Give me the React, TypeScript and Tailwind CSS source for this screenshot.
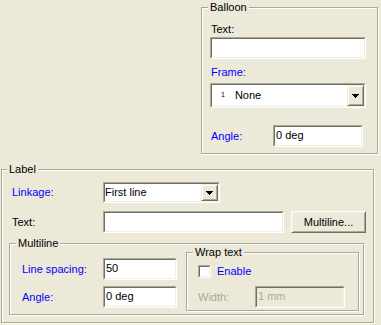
import React from "react";

function Group({
  title,
  className = "",
  legendLeft = "left-[5px]",
  children,
}: {
  title: string;
  className?: string;
  legendLeft?: string;
  children?: React.ReactNode;
}) {
  return (
    <div
      className={`relative border border-[#ACA899] shadow-[inset_1px_1px_0_#fff,1px_1px_0_#fff] ${className}`}
    >
      <span
        className={`absolute top-[-7px] ${legendLeft} bg-[#ECE9D8] px-[2px] leading-[13px] text-black`}
      >
        {title}
      </span>
      {children}
    </div>
  );
}

function Sunken({
  className = "",
  disabled = false,
  children,
}: {
  className?: string;
  disabled?: boolean;
  children?: React.ReactNode;
}) {
  return (
    <div
      className={`border border-t-[#ACA899] border-l-[#ACA899] border-b-white border-r-white ${className}`}
    >
      <div
        className={`h-full w-full border border-t-[#716F64] border-l-[#716F64] border-b-[#F1EFE2] border-r-[#F1EFE2] flex items-center ${
          disabled ? "bg-[#ECE9D8] text-[#ACA899]" : "bg-white text-black"
        }`}
      >
        {children}
      </div>
    </div>
  );
}

function Arrow() {
  return (
    <svg width="7" height="4" viewBox="0 0 7 4" className="block">
      <path d="M0 0h7v1H0zM1 1h5v1H1zM2 2h3v1H2zM3 3h1v1H3z" fill="#000" />
    </svg>
  );
}

function ArrowButton() {
  return (
    <div className="ml-auto w-[17px] h-full bg-[#ECE9D8] border border-t-[#F1EFE2] border-l-[#F1EFE2] border-b-[#716F64] border-r-[#716F64] shadow-[inset_1px_1px_0_#fff,inset_-1px_-1px_0_#ACA899] flex items-center justify-center">
      <Arrow />
    </div>
  );
}

function Checkbox() {
  return (
    <div className="w-[13px] h-[13px] border border-t-[#ACA899] border-l-[#ACA899] border-b-white border-r-white">
      <div className="w-full h-full bg-white border border-t-[#716F64] border-l-[#716F64] border-b-[#F1EFE2] border-r-[#F1EFE2]" />
    </div>
  );
}

export default function App() {
  return (
    <div className="w-[381px] h-[325px] overflow-hidden bg-[#ECE9D8] text-[11px] leading-[13px] text-black font-['Liberation_Sans',Arial,sans-serif] flex flex-col pt-[7px]">
      {/* Balloon */}
      <div className="pl-[201px]">
        <Group title="Balloon" className="w-[177px] h-[147px]" legendLeft="left-[6px]">
          <div className="flex flex-col pl-[8px] pt-[15px]">
            <div className="ml-[1px]">Text:</div>
            <Sunken className="mt-[1px] w-[156px] h-[22px]" />
            <div className="ml-[1px] mt-[7px] text-[#0000FF]">Frame:</div>
            <Sunken className="mt-[4px] w-[156px] h-[25px]">
              <span className="ml-[9px] mt-[-3px] text-[7px] leading-none">1</span>
              <span className="ml-[10px]">None</span>
              <ArrowButton />
            </Sunken>
            <div className="mt-[17px] flex items-center">
              <div className="ml-[1px] w-[62px] text-[#0000FF]">Angle:</div>
              <Sunken className="w-[90px] h-[22px]">
                <span className="pl-[1px] pb-[1px]">0 deg</span>
              </Sunken>
            </div>
          </div>
        </Group>
      </div>

      {/* Label */}
      <div className="mt-[15px] pl-[1px]">
        <Group title="Label" className="w-[373px] h-[154px]" legendLeft="left-[5px]">
          <div className="flex flex-col pt-[12px]">
            <div className="flex items-center">
              <div className="w-[101px] pl-[10px] text-[#0000FF]">Linkage:</div>
              <Sunken className="w-[117px] h-[21px]">
                <span className="pb-[1px]">First line</span>
                <ArrowButton />
              </Sunken>
            </div>
            <div className="mt-[8px] flex items-center">
              <div className="w-[101px] pl-[10px]">Text:</div>
              <Sunken className="w-[181px] h-[22px]" />
              <div className="ml-[7px] w-[75px] h-[22px] bg-[#ECE9D8] border border-t-white border-l-white border-b-[#716F64] border-r-[#716F64] shadow-[inset_1px_1px_0_#F1EFE2,inset_-1px_-1px_0_#ACA899] flex items-center justify-center">
                Multiline...
              </div>
            </div>

            <Group title="Multiline" className="ml-[7px] mt-[10px] w-[355px] h-[72px]" legendLeft="left-[6px]">
              <div className="flex">
                <div className="w-[176px] flex flex-col pt-[14px] pl-[12px]">
                  <div className="flex items-center">
                    <div className="w-[81px] text-[#0000FF]">Line spacing:</div>
                    <Sunken className="w-[74px] h-[22px]">
                      <span className="pl-[1px] pb-[1px]">50</span>
                    </Sunken>
                  </div>
                  <div className="mt-[6px] flex items-center">
                    <div className="w-[81px] text-[#0000FF]">Angle:</div>
                    <Sunken className="w-[74px] h-[22px]">
                      <span className="pl-[1px] pb-[1px]">0 deg</span>
                    </Sunken>
                  </div>
                </div>

                <Group title="Wrap text" className="mt-[8px] w-[173px] h-[59px]" legendLeft="left-[6px]">
                  <div className="flex flex-col pl-[11px] pt-[12px]">
                    <div className="flex items-center">
                      <Checkbox />
                      <span className="ml-[6px] text-[#0000FF]">Enable</span>
                    </div>
                    <div className="mt-[8px] flex items-center">
                      <div className="w-[57px] text-[#ACA899]">Width:</div>
                      <Sunken disabled className="w-[90px] h-[22px]">
                        <span className="pl-[1px] pb-[1px]">1 mm</span>
                      </Sunken>
                    </div>
                  </div>
                </Group>
              </div>
            </Group>
          </div>
        </Group>
      </div>
    </div>
  );
}
